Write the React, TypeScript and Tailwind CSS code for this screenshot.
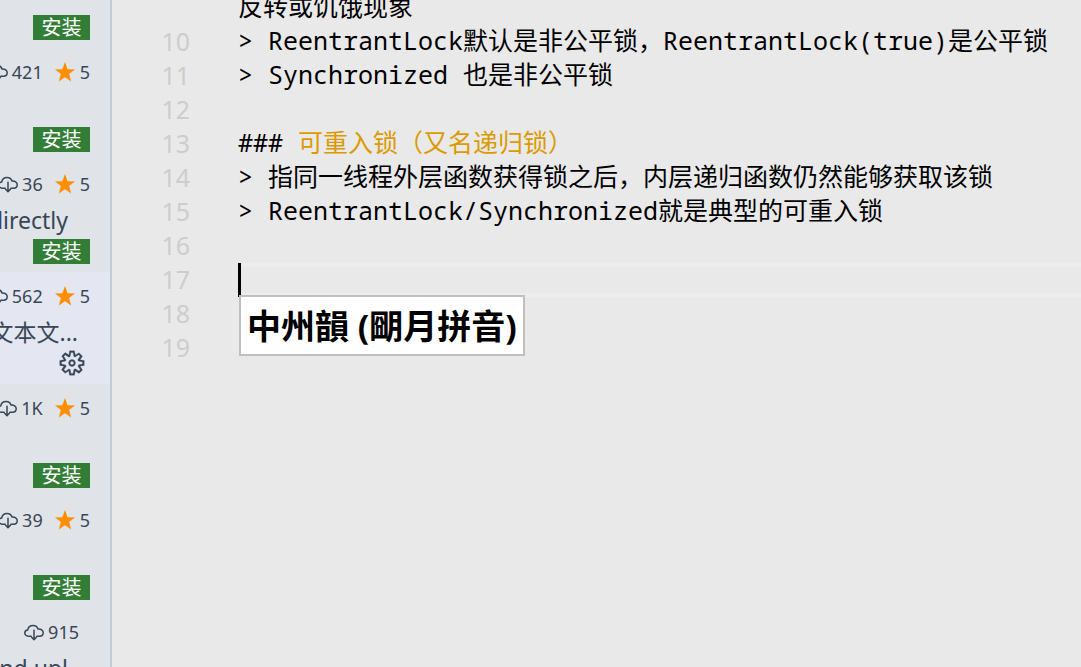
import { VscGear } from "react-icons/vsc";
import type { ReactNode } from "react";

type Extension = {
  installs: string;
  rating?: string;
  description: string;
  action: "install" | "manage";
};

const extensions: Extension[] = [
  { installs: "", description: "", action: "install" },
  { installs: "421", rating: "5", description: "", action: "install" },
  { installs: "36", rating: "5", description: "directly", action: "install" },
  { installs: "562", rating: "5", description: "文本文...", action: "manage" },
  { installs: "1K", rating: "5", description: "", action: "install" },
  { installs: "39", rating: "5", description: "", action: "install" },
  { installs: "915", description: "and upl", action: "install" },
];

function CloudDownload() {
  return (
    <svg
      viewBox="0 0 20 20"
      className="size-5 shrink-0"
      fill="none"
      stroke="currentColor"
      strokeWidth="1.5"
      strokeLinecap="round"
      strokeLinejoin="round"
      aria-hidden="true"
    >
      <path d="M7.200 14.200H4.400C2.300 14.200.8 12.800.8 11c0-1.800 1.300-3 3-3.100C4.200 5.200 6.500 3.500 9.100 3.500c2.400 0 4.200 1.300 4.900 3.500 2.900-.2 5.200 1.300 5.200 3.700 0 2.200-1.700 3.500-3.800 3.500h-2.600" />
      <path d="M10 8.300v9M7.600 15.200 10 17.600l2.400-2.400" />
    </svg>
  );
}

function Star() {
  return (
    <svg viewBox="0 0 19 19" className="size-5 shrink-0 fill-[#ff8e00]" aria-hidden="true">
      <path d="M9.5 0 12 6.9 19 7.1 13.4 11.4 15.4 18.6 9.5 14.4 3.6 18.6 5.6 11.4 0 7.1 7 6.9Z" />
    </svg>
  );
}

function ExtensionRow({ item }: { item: Extension }) {
  const selected = item.action === "manage";
  return (
    <li className={`flex h-28 shrink-0 flex-col items-end pr-5 ${selected ? "bg-[#e4e6f1]" : ""}`}>
      <div className="flex h-12 items-center gap-3 text-lg">
        {item.installs && (
          <span className={`flex items-center gap-1 ${item.rating ? "" : "pr-[11px]"}`}>
            <CloudDownload />
            {item.installs}
          </span>
        )}
        {item.rating && (
          <span className="flex items-center gap-[5px]">
            <Star />
            {item.rating}
          </span>
        )}
      </div>
      <p className={`flex h-6 items-center text-[23px] whitespace-nowrap ${selected ? "pr-3" : "pr-[22px]"}`}>
        {item.description}
      </p>
      {selected ? (
        <button type="button" aria-label="管理" className="mt-[5px] mr-1">
          <VscGear className="size-7" strokeWidth={0.15} />
        </button>
      ) : (
        <button type="button" className="mt-[7px] flex h-[25px] w-[57px] items-center justify-center bg-[#327e36] text-xl text-white">
          安装
        </button>
      )}
    </li>
  );
}

const lines: { number: number; content: ReactNode }[] = [
  { number: 10, content: "> ReentrantLock默认是非公平锁，ReentrantLock(true)是公平锁" },
  { number: 11, content: "> Synchronized 也是非公平锁" },
  { number: 12, content: "" },
  { number: 13, content: <>### <span className="text-[#dd9a00]">可重入锁（又名递归锁）</span></> },
  { number: 14, content: "> 指同一线程外层函数获得锁之后，内层递归函数仍然能够获取该锁" },
  { number: 15, content: "> ReentrantLock/Synchronized就是典型的可重入锁" },
  { number: 16, content: "" },
  { number: 17, content: "" },
  { number: 18, content: "" },
  { number: 19, content: "" },
];

function Line({ number, children }: { number?: number; children: ReactNode }) {
  const current = number === 17;
  return (
    <div className="flex h-[34px] items-start text-[25px]">
      <span className="w-[78px] shrink-0 text-right font-['Noto_Sans'] leading-8 text-[#cdcdcd]">{number}</span>
      <div
        className={`relative ml-12 h-full flex-1 font-['Noto_Sans_Mono','DejaVu_Sans_Mono','Noto_Sans_CJK_SC',monospace] leading-[30px] whitespace-pre ${
          current ? "border-y-4 border-[#ededed]" : ""
        }`}
      >
        {children}
        {current && (
          <>
            <span className="absolute -top-1 left-0 h-[34px] w-[3px] bg-black" />
            <div className="absolute top-7 left-px flex h-[61px] items-center border-2 border-[#bfbfbf] bg-white px-[6px] font-['Noto_Sans','Noto_Sans_CJK_SC',sans-serif] text-[34px] font-bold">
              中州韻 (朙月拼音)
            </div>
          </>
        )}
      </div>
    </div>
  );
}

export default function App() {
  return (
    <div className="flex h-screen overflow-hidden bg-[#e9e9e9] font-['Noto_Sans','Noto_Sans_CJK_SC',sans-serif] text-black">
      <aside className="w-28 shrink-0 overflow-hidden border-r-2 border-[#bfccd3] bg-[#e0e3e8] text-[#384657]">
        <ul className="-mt-16 flex flex-col">
          {extensions.map((item, i) => (
            <ExtensionRow key={i} item={item} />
          ))}
        </ul>
      </aside>
      <main className="-mt-[9px] min-w-0 flex-1 overflow-hidden">
        <Line>反转或饥饿现象</Line>
        {lines.map((line) => (
          <Line key={line.number} number={line.number}>
            {line.content}
          </Line>
        ))}
      </main>
    </div>
  );
}
